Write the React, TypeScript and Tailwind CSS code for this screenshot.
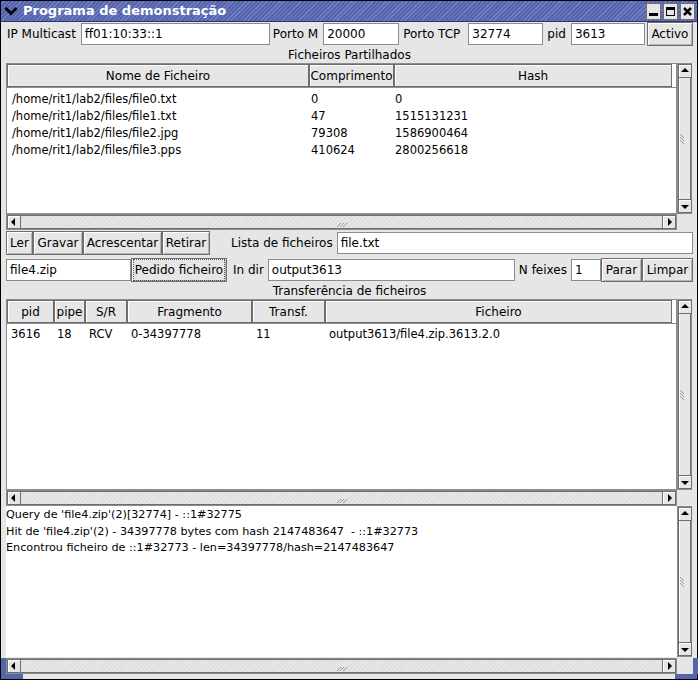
import React from 'react';

const font = "font-['DejaVu_Sans',sans-serif] text-[12px] text-black";

const Label: React.FC<{ text: string; cls?: string }> = ({ text, cls = '' }) => (
    <span className={`whitespace-nowrap shrink-0 ${cls}`}>{text}</span>
);

const Input: React.FC<{ value: string; w: string }> = ({ value, w }) => (
    <div className={`${w} h-[22px] shrink-0 bg-white border border-[#8c8c8c] flex items-center px-[3px] leading-none whitespace-nowrap`}>
        {value}
    </div>
);

const Button: React.FC<{ label: string; w: string; focus?: boolean }> = ({ label, w, focus }) => (
    <div className={`${w} h-[24px] shrink-0 bg-[#e6e6e6] border border-[#6e6e6e] shadow-[inset_1px_1px_0_#fff,inset_-1px_-1px_0_#b4b4b4] flex items-center justify-center leading-none whitespace-nowrap`}>
        <span className={focus ? 'outline outline-1 outline-dotted outline-[#555] px-[1px] py-[4px]' : ''}>{label}</span>
    </div>
);

const Arrow: React.FC<{ dir: 'up' | 'down' | 'left' | 'right' }> = ({ dir }) => {
    const pts = {
        up: '3,8 7,4 11,8',
        down: '3,6 7,10 11,6',
        left: '8,3 4,7 8,11',
        right: '6,3 10,7 6,11',
    }[dir];
    return (
        <div className="w-[14px] h-[14px] bg-[#e6e6e6] border border-[#6e6e6e] shadow-[inset_1px_1px_0_#fff] flex items-center justify-center shrink-0">
            <svg width="12" height="12" viewBox="1 1 12 12">
                <polygon points={pts} fill="#000" />
            </svg>
        </div>
    );
};

const Grip: React.FC = () => (
    <svg width="12" height="12" viewBox="0 0 12 12">
        <path d="M1 11 L5 7 M4 11 L8 7 M7 11 L11 7" stroke="#999" strokeWidth="1" />
    </svg>
);

const VScroll: React.FC<{ h: string }> = ({ h }) => (
    <div className={`w-[15px] ${h} shrink-0 bg-[#d6d6d6] border border-[#8c8c8c] flex flex-col`}>
        <Arrow dir="up" />
        <div className="flex-1 bg-[#e6e6e6] border-x border-[#6e6e6e] shadow-[inset_1px_0_0_#fff] flex items-center justify-center">
            <div className="rotate-90"><Grip /></div>
        </div>
        <Arrow dir="down" />
    </div>
);

const HScroll: React.FC = () => (
    <div className="w-[671px] h-[16px] bg-[#d6d6d6] border border-[#8c8c8c] flex">
        <Arrow dir="left" />
        <div className="flex-1 bg-[#e6e6e6] bg-[repeating-linear-gradient(135deg,#e6e6e6_0px,#e6e6e6_2px,#dcdcdc_2px,#dcdcdc_3px)] border-y border-[#6e6e6e] flex items-center justify-center">
            <Grip />
        </div>
        <Arrow dir="right" />
    </div>
);

const Header: React.FC<{ cols: [string, string][] }> = ({ cols }) => (
    <div className="flex h-[24px] border-b border-[#8c8c8c] shrink-0">
        {cols.map(([label, w]) => (
            <div key={label} className={`${w} bg-[#e6e6e6] border border-[#6e6e6e] shadow-[inset_1px_1px_0_#fff] flex items-center justify-center whitespace-nowrap`}>
                {label}
            </div>
        ))}
    </div>
);

const files = [
    ['/home/rit1/lab2/files/file0.txt', '0', '0'],
    ['/home/rit1/lab2/files/file1.txt', '47', '1515131231'],
    ['/home/rit1/lab2/files/file2.jpg', '79308', '1586900464'],
    ['/home/rit1/lab2/files/file3.pps', '410624', '2800256618'],
];

const logLines = [
    "Query de 'file4.zip'(2)[32774] - ::1#32775",
    "Hit de 'file4.zip'(2) - 34397778 bytes com hash 2147483647  - ::1#32773",
    'Encontrou ficheiro de ::1#32773 - len=34397778/hash=2147483647',
];

const SideFrame: React.FC = () => (
    <div className="w-[5px] flex flex-col shrink-0">
        <div className="flex-1" />
        <div className="h-[16px] bg-[#5663ad]" />
    </div>
);

const App: React.FC = () => {
    return (
        <div className={`${font} w-[698px] h-[680px] bg-[#e6e6e6] border border-black flex flex-col`}>
            {/* title bar */}
            <div className="h-[21px] shrink-0 flex items-center bg-[#5663ad] bg-[repeating-linear-gradient(135deg,#5663ad_0px,#5663ad_2px,#7280c4_2px,#7280c4_3px)] border-b border-[#2e3470]">
                <div className="w-[20px] flex items-center justify-center">
                    <svg width="14" height="10" viewBox="0 0 14 10">
                        <path d="M1.5 2 L7 7.5 L12.5 2" stroke="#000" strokeWidth="3" fill="none" />
                    </svg>
                </div>
                <span className="text-white font-bold text-[13px] ml-[2px] flex-1 whitespace-nowrap">Programa de demonstração</span>
                <div className="flex gap-[2px] mr-[2px]">
                    {['min', 'max', 'close'].map((k) => (
                        <div key={k} className="w-[15px] h-[17px] bg-[#e6e6e6] border border-[#6e6e6e] flex items-center justify-center">
                            <svg width="11" height="11" viewBox="0 0 11 11">
                                {k === 'min' && <rect x="1" y="7" width="9" height="3" fill="#000" />}
                                {k === 'max' && <rect x="1.5" y="1.5" width="8" height="8" stroke="#000" strokeWidth="1" fill="none" />}
                                {k === 'max' && <rect x="1" y="1" width="9" height="3" fill="#000" />}
                                {k === 'close' && <path d="M2 2 L9 9 M9 2 L2 9" stroke="#000" strokeWidth="2.5" />}
                            </svg>
                        </div>
                    ))}
                </div>
            </div>

            <div className="flex-1 flex">
                <SideFrame />
                <div className="flex-1 flex flex-col">
                    {/* row 1 */}
                    <div className="flex items-center h-[24px] shrink-0">
                        <Label text="IP Multicast" cls="ml-[1px] mr-[5px]" />
                        <Input value="ff01:10:33::1" w="w-[189px]" />
                        <Label text="Porto M" cls="ml-[3px] mr-[5px]" />
                        <Input value="20000" w="w-[76px]" />
                        <Label text="Porto TCP" cls="ml-[4px] mr-[8px]" />
                        <Input value="32774" w="w-[75px]" />
                        <Label text="pid" cls="ml-[4px] mr-[5px]" />
                        <Input value="3613" w="w-[74px]" />
                        <div className="ml-[2px]"><Button label="Activo" w="w-[46px]" /></div>
                    </div>

                    <div className="h-[17px] shrink-0 flex items-center justify-center">Ficheiros Partilhados</div>

                    {/* table 1 */}
                    <div className="flex shrink-0">
                        <div className="w-[671px] h-[151px] bg-white border border-[#8c8c8c] flex flex-col">
                            <Header cols={[['Nome de Ficheiro', 'w-[302px]'], ['Comprimento', 'w-[85px]'], ['Hash', 'w-[278px]']]} />
                            <div className="flex flex-col pt-[3px] text-[11.5px]">
                                {files.map((f) => (
                                    <div key={f[0]} className="flex h-[17px] items-center">
                                        <div className="w-[302px] pl-[5px]">{f[0]}</div>
                                        <div className="w-[85px] pl-[2px]">{f[1]}</div>
                                        <div className="pl-[1px]">{f[2]}</div>
                                    </div>
                                ))}
                            </div>
                        </div>
                        <VScroll h="h-[151px]" />
                    </div>
                    <HScroll />

                    {/* row buttons */}
                    <div className="flex items-center h-[24px] mt-[1px] shrink-0">
                        <Button label="Ler" w="w-[27px]" />
                        <Button label="Gravar" w="w-[50px]" />
                        <Button label="Acrescentar" w="w-[79px]" />
                        <Button label="Retirar" w="w-[48px]" />
                        <Label text="Lista de ficheiros" cls="ml-[21px] mr-[4px]" />
                        <Input value="file.txt" w="flex-1" />
                    </div>

                    {/* row request */}
                    <div className="flex items-center h-[25px] mt-[2px] shrink-0">
                        <Input value="file4.zip" w="w-[125px]" />
                        <Button label="Pedido ficheiro" w="w-[96px]" focus />
                        <Label text="In dir" cls="ml-[6px] mr-[4px]" />
                        <Input value="output3613" w="w-[247px]" />
                        <Label text="N feixes" cls="ml-[4px] mr-[4px]" />
                        <Input value="1" w="w-[30px]" />
                        <Button label="Parar" w="w-[41px]" />
                        <Button label="Limpar" w="flex-1" />
                    </div>

                    <div className="h-[17px] shrink-0 flex items-center justify-center">Transferência de ficheiros</div>

                    {/* table 2 */}
                    <div className="flex shrink-0">
                        <div className="w-[671px] h-[191px] bg-white border border-[#8c8c8c] flex flex-col">
                            <Header
                                cols={[
                                    ['pid', 'w-[47px]'],
                                    ['pipe', 'w-[31px]'],
                                    ['S/R', 'w-[42px]'],
                                    ['Fragmento', 'w-[125px]'],
                                    ['Transf.', 'w-[73px]'],
                                    ['Ficheiro', 'w-[347px]'],
                                ]}
                            />
                            <div className="flex h-[22px] items-center text-[11.5px]">
                                <div className="w-[47px] pl-[4px]">3616</div>
                                <div className="w-[31px] pl-[3px]">18</div>
                                <div className="w-[42px] pl-[4px]">RCV</div>
                                <div className="w-[125px] pl-[4px]">0-34397778</div>
                                <div className="w-[73px] pl-[4px]">11</div>
                                <div className="pl-[4px]">output3613/file4.zip.3613.2.0</div>
                            </div>
                        </div>
                        <VScroll h="h-[191px]" />
                    </div>
                    <HScroll />

                    {/* log */}
                    <div className="flex shrink-0">
                        <div className="w-[671px] h-[151px] bg-white flex flex-col pt-[1px] text-[11.2px]">
                            {logLines.map((l) => (
                                <div key={l} className="h-[16.5px] leading-[16px] whitespace-pre">{l}</div>
                            ))}
                        </div>
                        <VScroll h="h-[151px]" />
                    </div>
                    <div className="mt-[1px]"><HScroll /></div>
                </div>
                <SideFrame />
            </div>
            <div className="h-[5px] shrink-0 flex">
                <div className="w-[22px] bg-[#5663ad]" />
                <div className="flex-1" />
                <div className="w-[22px] bg-[#5663ad]" />
            </div>
        </div>
    );
};

export default App;
